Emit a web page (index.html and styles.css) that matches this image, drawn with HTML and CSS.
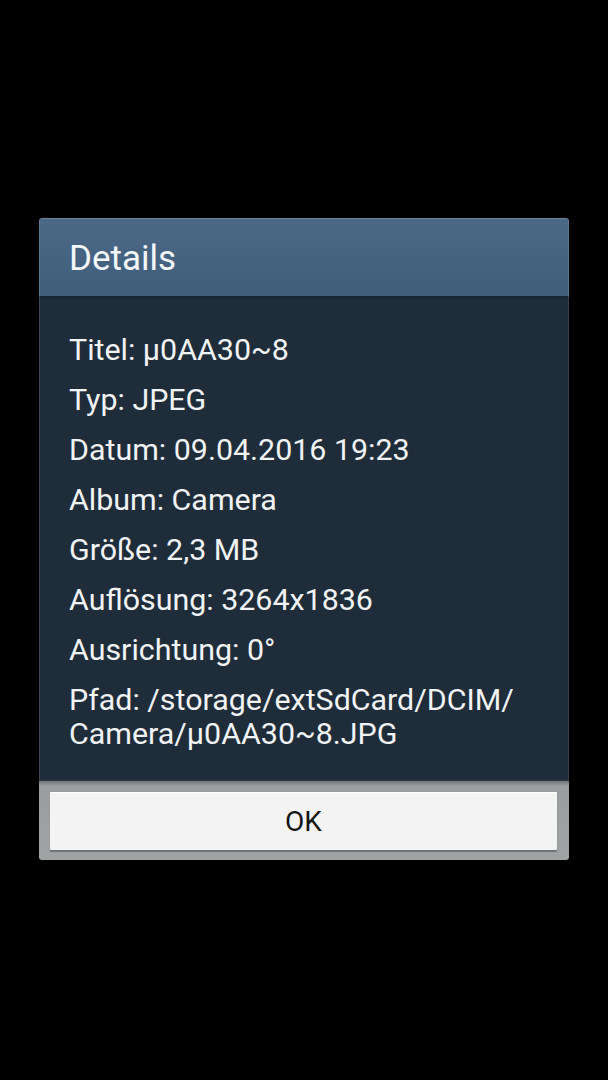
FILE: index.html
```html
<!DOCTYPE html>
<html lang="de">
<head>
<meta charset="utf-8">
<title>Details</title>
<link rel="stylesheet" href="styles.css">
</head>
<body>
<div class="screen">
  <div class="dialog">
    <div class="dialog-header">Details</div>
    <div class="dialog-body">
      <p class="row">Titel: μ0AA30~8</p>
      <p class="row">Typ: JPEG</p>
      <p class="row">Datum: 09.04.2016 19:23</p>
      <p class="row">Album: Camera</p>
      <p class="row">Größe: 2,3 MB</p>
      <p class="row">Auflösung: 3264x1836</p>
      <p class="row">Ausrichtung: 0°</p>
      <p class="row">Pfad: /storage/extSdCard/DCIM/<br>Camera/μ0AA30~8.JPG</p>
    </div>
    <div class="dialog-footer">
      <button class="btn-ok" type="button">OK</button>
    </div>
  </div>
</div>
</body>
</html>
```
FILE: styles.css
```css
html, body {
  margin: 0;
  padding: 0;
  background: #000;
}
.screen {
  width: 608px;
  height: 1080px;
  background: #000;
  padding-top: 218px;
  box-sizing: border-box;
  font-family: Roboto, "Noto Sans", sans-serif;
}
.dialog {
  margin-left: 39px;
  width: 530px;
  border-radius: 3px;
  overflow: hidden;
}
.dialog-header {
  height: 80px;
  box-sizing: border-box;
  padding: 2px 0 0 30px;
  display: flex;
  align-items: center;
  background: linear-gradient(#4b6987, #3f5e7c);
  border-top: 1px solid #6c8399;
  border-left: 1px solid #5d7690;
  border-right: 1px solid #5d7690;
  border-bottom: 2px solid #1a2733;
  color: #f4f6f8;
  font-size: 35px;
}
.dialog-header {
  padding-left: 29px;
}
.dialog-body {
  background: #1f2d3a;
  padding: 35px 20px 29px 29px;
  color: #f1f3f5;
  font-size: 30.4px;
  border-left: 1px solid #3a4652;
  border-right: 1px solid #34414d;
}
.row {
  margin: 0 0 16px;
  line-height: 34px;
}
.row:last-child {
  margin-bottom: 0;
}
.dialog-footer {
  background: linear-gradient(#6f7679 0, #9a9ea0 5px, #a0a3a4 100%);
  padding: 11px 12px 10px 11px;
  border-top: 1px solid #2a3640;
}
.btn-ok {
  display: block;
  width: 100%;
  height: 58px;
  margin: 0;
  border: none;
  border-top: 1px solid #ffffff;
  border-radius: 1px;
  background: #f3f3f3;
  box-shadow: 0 2px 1px #6c7173;
  font-family: Roboto, "Noto Sans", sans-serif;
  font-size: 28px;
  color: #151515;
  padding: 0;
}
```
